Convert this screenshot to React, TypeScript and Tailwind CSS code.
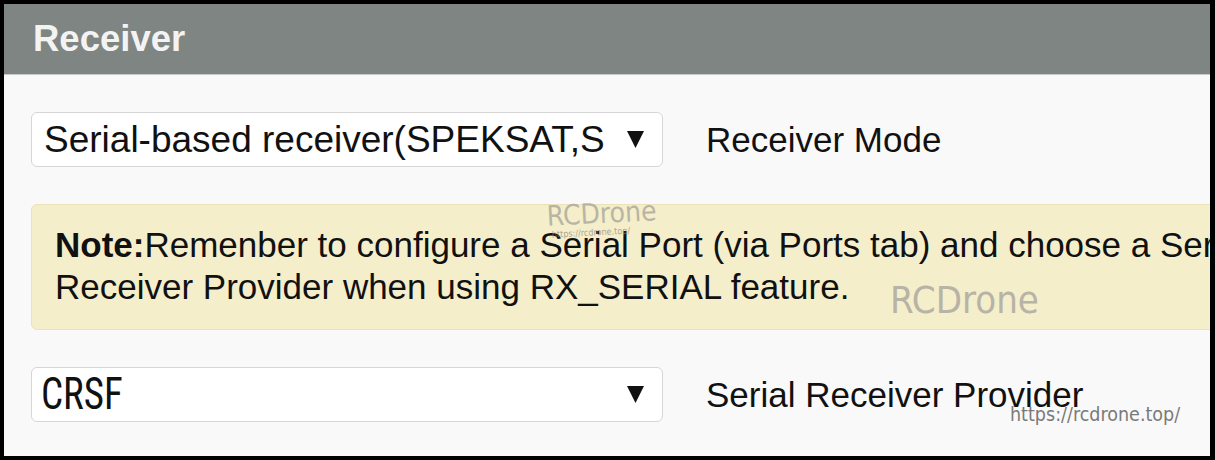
import React from "react";

const arial = { fontFamily: '"Liberation Sans", Arial, sans-serif' };

function Arrow() {
  return (
    <svg width="17" height="17" viewBox="0 0 17 17" className="shrink-0">
      <polygon points="0,0 17,0 8.5,17" fill="#111" />
    </svg>
  );
}

export default function App() {
  return (
    <div className="w-[1215px] h-[460px] bg-black pt-[4px] pl-[4px] pr-[5px] pb-[4px] overflow-hidden">
      <div className="relative w-full h-full bg-[#f9f9f9] overflow-hidden flex flex-col" style={arial}>
        <div className="h-[71px] bg-[#7f8582] border-b border-[#c5cac7] flex items-center pl-[29px] shrink-0">
          <span className="text-[36.5px] font-bold text-[#f3f3f3] leading-none">Receiver</span>
        </div>

        <div className="flex items-center mt-[37px] pl-[27px]">
          <div className="w-[632px] h-[55px] bg-white border border-[#d6d6d6] rounded-[6px] flex items-center justify-between pl-[12px] pr-[18px] overflow-hidden">
            <span className="text-[37px] text-[#111] leading-none whitespace-nowrap">Serial-based receiver(SPEKSAT,S</span>
            <Arrow />
          </div>
          <span className="ml-[43px] text-[35px] text-[#111] leading-none">Receiver Mode</span>
        </div>

        <div className="ml-[27px] mt-[37px] w-[1250px] h-[126px] bg-[#f5eecb] border border-[#ebe2b8] rounded-[6px] pl-[23px] pt-[19px] text-[35px] leading-[42px] text-[#111] whitespace-nowrap">
          <div><b>Note:</b>Remenber to configure a Serial Port (via Ports tab) and choose a Serial</div>
          <div>Receiver Provider when using RX_SERIAL feature.</div>
        </div>

        <div className="flex items-center mt-[37px] pl-[27px]">
          <div className="w-[632px] h-[55px] bg-white border border-[#d6d6d6] rounded-[6px] flex items-center justify-between pl-[9px] pr-[18px]">
            <span className="text-[39px] text-[#111] leading-none" style={{ fontFamily: '"Liberation Sans Narrow", "Roboto Condensed", "DejaVu Sans Condensed", sans-serif', transform: "scaleY(1.12)" }}>CRSF</span>
            <Arrow />
          </div>
          <span className="ml-[43px] text-[35px] text-[#111] leading-none">Serial Receiver Provider</span>
        </div>

        <div className="absolute left-[543px] top-[196px] -rotate-3 flex flex-col items-start opacity-70" style={{ fontFamily: '"DejaVu Sans Condensed", sans-serif' }}>
          <span className="text-[28px] text-[#a09e96] leading-none">RCDrone</span>
          <span className="text-[9px] text-[#8a887f] leading-none ml-[4px]">https://rcdrone.top/</span>
        </div>
        <div className="absolute left-[886px] top-[277px] text-[38px] text-[#a8a59c] opacity-80 leading-none" style={{ fontFamily: '"DejaVu Sans Condensed", sans-serif' }}>RCDrone</div>
        <div className="absolute left-[1006px] top-[401px] text-[19.5px] text-[#7a7a7a] leading-none" style={{ fontFamily: '"DejaVu Sans Condensed", sans-serif' }}>https://rcdrone.top/</div>
      </div>
    </div>
  );
}
